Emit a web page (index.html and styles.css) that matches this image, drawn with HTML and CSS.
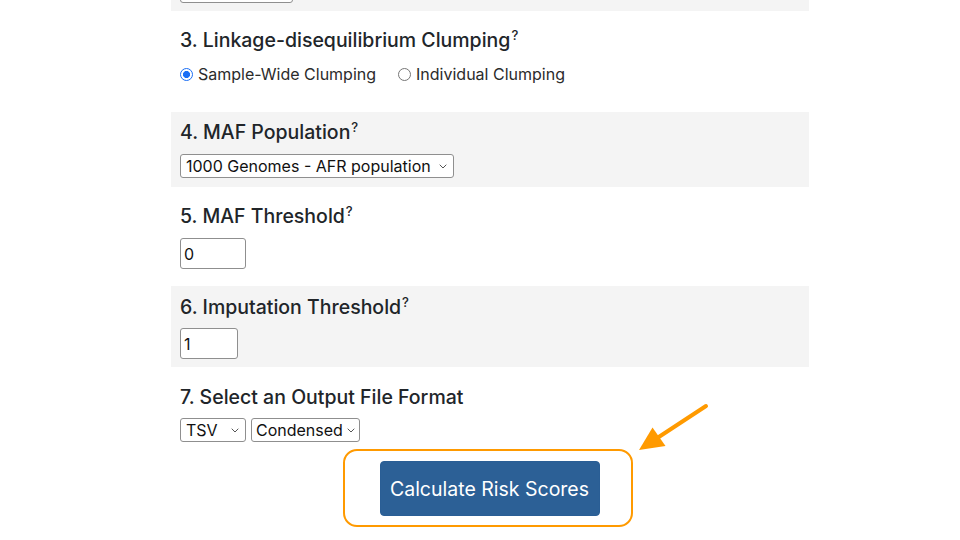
FILE: index.html
```html
<!DOCTYPE html>
<html lang="en">
<head>
<meta charset="utf-8">
<title>Risk Score Form</title>
<link rel="stylesheet" href="styles.css">
</head>
<body>
<div class="form">
  <section class="sec gray tail">
    <div class="select-wrap">
      <select class="sel sel-tail"><option>GRCh37</option></select>
      <svg class="chev" width="8" height="5" viewBox="0 0 8 5"><path d="M0.7 0.7 L4 4 L7.3 0.7" fill="none" stroke="#555" stroke-width="1"/></svg>
    </div>
  </section>

  <section class="sec s3">
    <h5 class="title">3. Linkage-disequilibrium Clumping<sup>?</sup></h5>
    <div class="radios">
      <label class="radio"><span class="dot checked"></span>Sample-Wide Clumping</label>
      <label class="radio"><span class="dot"></span>Individual Clumping</label>
    </div>
  </section>

  <section class="sec gray s4">
    <h5 class="title">4. MAF Population<sup>?</sup></h5>
    <div class="select-wrap">
      <select class="sel sel-pop"><option>1000 Genomes - AFR population</option></select>
      <svg class="chev" width="8" height="5" viewBox="0 0 8 5"><path d="M0.7 0.7 L4 4 L7.3 0.7" fill="none" stroke="#555" stroke-width="1"/></svg>
    </div>
  </section>

  <section class="sec s5">
    <h5 class="title">5. MAF Threshold<sup>?</sup></h5>
    <input class="num num-maf" type="text" value="0">
  </section>

  <section class="sec gray s6">
    <h5 class="title">6. Imputation Threshold<sup>?</sup></h5>
    <input class="num num-imp" type="text" value="1">
  </section>

  <section class="sec s7">
    <h5 class="title">7. Select an Output File Format</h5>
    <div class="selects">
      <div class="select-wrap">
        <select class="sel sel-tsv"><option>TSV</option></select>
        <svg class="chev" width="8" height="5" viewBox="0 0 8 5"><path d="M0.7 0.7 L4 4 L7.3 0.7" fill="none" stroke="#555" stroke-width="1"/></svg>
      </div>
      <div class="select-wrap">
        <select class="sel sel-cond"><option>Condensed</option></select>
        <svg class="chev" width="8" height="5" viewBox="0 0 8 5"><path d="M0.7 0.7 L4 4 L7.3 0.7" fill="none" stroke="#555" stroke-width="1"/></svg>
      </div>
    </div>
    <div class="submit-row">
      <div class="highlight">
        <button class="btn" type="button">Calculate Risk Scores</button>
      </div>
    </div>
  </section>
</div>

<svg class="arrow" width="960" height="540" viewBox="0 0 960 540">
  <line x1="706" y1="406" x2="658" y2="437.5" stroke="#ff9a00" stroke-width="4" stroke-linecap="round"/>
  <polygon points="639,450 652.5,427.5 665.5,446" fill="#ff9a00"/>
</svg>
</body>
</html>
```

FILE: styles.css
```css
* { box-sizing: border-box; }

html, body {
  margin: 0;
  padding: 0;
  background: #ffffff;
}

body {
  font-family: Inter, "Liberation Sans", Arial, sans-serif;
  color: #212529;
  width: 960px;
  height: 540px;
  overflow: hidden;
  position: relative;
}

.form {
  margin-left: 171px;
  width: 638px;
}

.sec {
  padding-left: 9px;
  padding-right: 9px;
}

.gray { background: #f4f4f4; }

.title {
  margin: 0;
  font-size: 19.5px;
  font-weight: 500;
  line-height: 25px;
  color: #212529;
}

.title sup {
  font-size: 13px;
  position: relative;
  top: -0.55em;
  vertical-align: baseline;
  line-height: 0;
  margin-left: 1px;
}

/* section vertical rhythm */
.tail { height: 11px; overflow: hidden; }
.tail .select-wrap { margin-top: -21px; }

.s3 { padding-top: 17px; height: 101px; }
.s4 { padding-top: 8px; padding-bottom: 9px; }
.s5 { padding-top: 17px; padding-bottom: 17px; }
.s6 { padding-top: 9px; padding-bottom: 8px; }
.s7 { padding-top: 18px; }

.s4 .title, .s5 .title { margin-bottom: 9px; }
.s6 .title, .s7 .title { margin-bottom: 8px; }

/* radios */
.radios {
  display: flex;
  gap: 22px;
  margin-top: 11px;
}

.radio {
  display: flex;
  align-items: center;
  font-size: 16px;
  line-height: 20px;
  color: #2b2b2b;
}

.dot {
  width: 13px;
  height: 13px;
  border-radius: 50%;
  border: 1px solid #767676;
  background: #fff;
  margin-right: 5px;
  flex: none;
}

.dot.checked {
  border: 1.5px solid #1a6ef5;
  background: radial-gradient(circle, #1a6ef5 0 3.3px, #ffffff 3.8px);
}

/* selects */
.select-wrap {
  position: relative;
  display: inline-block;
  vertical-align: top;
}

.sel {
  -webkit-appearance: none;
  appearance: none;
  display: block;
  height: 24px;
  margin: 0;
  padding: 0 0 0 5px;
  border: 1px solid #8f8f8f;
  border-radius: 3px;
  background: #ffffff;
  font-family: Inter, "Liberation Sans", Arial, sans-serif;
  font-size: 16px;
  line-height: 22px;
  color: #111;
}

.chev {
  position: absolute;
  top: 10px;
  right: 7px;
  pointer-events: none;
}

.sel-tail { width: 113px; }
.sel-pop { width: 274px; }
.sel-tsv { width: 66px; }
.sel-cond { width: 109px; padding-left: 4px; }

.sel-cond + .chev { right: 5px; }

.selects {
  display: flex;
  gap: 5px;
}

/* inputs */
.num {
  display: block;
  height: 31px;
  margin: 0;
  padding: 0 0 0 3px;
  border: 1px solid #8f8f8f;
  border-radius: 3px;
  background: #fff;
  font-family: Inter, "Liberation Sans", Arial, sans-serif;
  font-size: 16px;
  color: #111;
}

.num-maf { width: 66px; }
.num-imp { width: 58px; }

/* submit */
.submit-row {
  display: flex;
  justify-content: center;
  margin-top: 7px;
}

.highlight {
  width: 290px;
  height: 78px;
  border: 2.5px solid #ff9a00;
  border-radius: 14px;
  padding: 9.5px 30.5px 0 34.5px;
  margin-right: 4px;
}

.btn {
  display: block;
  width: 220px;
  height: 55px;
  margin: 0;
  border: 1px solid #2a5e95;
  border-radius: 4px;
  background: #2c6096;
  color: #ffffff;
  font-family: Inter, "Liberation Sans", Arial, sans-serif;
  font-size: 19.5px;
  line-height: 24px;
  padding: 2px 0 0 0;
}

.arrow {
  position: absolute;
  left: 0;
  top: 0;
  pointer-events: none;
}
```
